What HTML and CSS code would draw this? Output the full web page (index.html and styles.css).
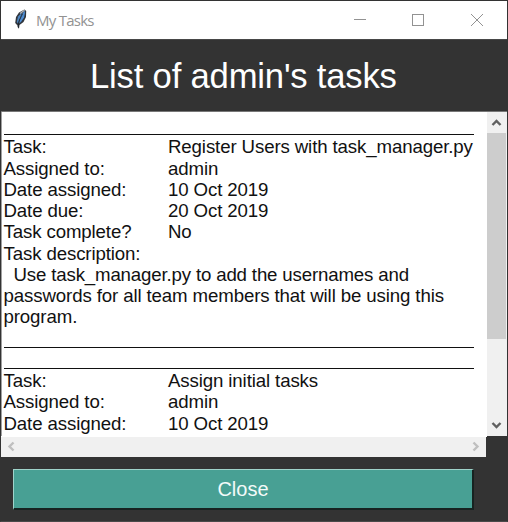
FILE: index.html
```html
<!DOCTYPE html>
<html lang="en">
<head>
<meta charset="utf-8">
<title>My Tasks</title>
<link rel="stylesheet" href="styles.css">
</head>
<body>
<div class="window">
  <header class="titlebar">
    <svg class="feather" width="14" height="22" viewBox="0 0 14 22">
      <path d="M10.5 1.5L12.2 3L12 9L9.5 14L5.5 17L5 20.5L4 20L3.5 17.5L1.2 15L2 9L5 4.5Z" fill="#30353b"/>
      <path d="M10.5 2.5L11 5L10 9.5L7 14L5 15.5L7 8Z" fill="#4c8bd0"/>
      <path d="M8 4.5L4 8.5L2.8 14L4 15.5Z" fill="#4c83be"/>
      <path d="M8.5 6L5 13L4.2 19" fill="none" stroke="#1b222b" stroke-width=".8"/>
      <path d="M10.5 2.2L6 5.5" stroke="#b4b8bd" stroke-width="1.2"/>
    </svg>
    <span class="caption">My Tasks</span>
    <svg class="controls" width="130" height="14" viewBox="0 0 130 14" fill="none" stroke="#929292" stroke-width="1">
      <path d="M0 6.5H12"/>
      <rect x="58.5" y="1.5" width="11" height="11"/>
      <path d="M117 1L129 13M129 1L117 13"/>
    </svg>
  </header>
  <h1 class="heading"><span>List of admin's tasks</span></h1>
  <div class="viewer">
    <main class="text">
      <div class="rule"></div>
      <div class="row"><span class="key">Task:</span><span>Register Users with task_manager.py</span></div>
      <div class="row"><span class="key">Assigned to:</span><span>admin</span></div>
      <div class="row"><span class="key">Date assigned:</span><span>10 Oct 2019</span></div>
      <div class="row"><span class="key">Date due:</span><span>20 Oct 2019</span></div>
      <div class="row"><span class="key">Task complete?</span><span>No</span></div>
      <div class="row">Task description:</div>
      <div class="row indent">Use task_manager.py to add the usernames and</div>
      <div class="row">passwords for all team members that will be using this</div>
      <div class="row">program.</div>
      <div class="rule"></div>
      <div class="rule"></div>
      <div class="row"><span class="key">Task:</span><span>Assign initial tasks</span></div>
      <div class="row"><span class="key">Assigned to:</span><span>admin</span></div>
      <div class="row"><span class="key">Date assigned:</span><span>10 Oct 2019</span></div>
    </main>
    <div class="vscroll">
      <svg width="20" height="21" viewBox="0 0 20 21"><path d="M5.5 13L9.5 9L13.5 13" fill="none" stroke="#606060" stroke-width="2.4"/></svg>
      <div class="thumb"></div>
      <svg width="20" height="21" viewBox="0 0 20 21"><path d="M5.5 8L9.5 12L13.5 8" fill="none" stroke="#606060" stroke-width="2.4"/></svg>
    </div>
  </div>
  <div class="hscroll">
    <svg width="20" height="20" viewBox="0 0 20 20"><path d="M12.5 5.5L8.5 9.5L12.5 13.5" fill="none" stroke="#bfbfbf" stroke-width="2.4"/></svg>
    <svg width="20" height="20" viewBox="0 0 20 20"><path d="M7.5 5.5L11.5 9.5L7.5 13.5" fill="none" stroke="#bfbfbf" stroke-width="2.4"/></svg>
  </div>
  <button class="close"><span>Close</span></button>
</div>
</body>
</html>
```
FILE: styles.css
```css
* { box-sizing: border-box; }
body { margin: 0; background: #333; font-family: "Liberation Sans", Arial, sans-serif; }
svg { display: block; flex: none; }
.window { width: 508px; height: 522px; overflow: hidden; border: 1px solid #333; border-bottom-color: #4a4a4a; background: #333; }
.titlebar { height: 38px; background: #fff; display: flex; align-items: center; padding-left: 13px; }
.feather { margin-top: -2px; }
.caption { margin: -1px 0 0 8px; font: 15px/20px "Open Sans", "Noto Sans", sans-serif; color: #929292; letter-spacing: -0.75px; width: 100px; white-space: nowrap; }
.controls { margin-left: 218px; }
.heading { margin: 0; height: 73px; border-top: 1px solid #484848; border-bottom: 1px solid #777; padding: 16px 0 0 89px; font-size: 34.67px; line-height: 40px; font-weight: 400; letter-spacing: -0.2px; color: #fff; white-space: nowrap; }
.viewer { display: flex; height: 325px; background: #fff; }
.text { width: 486px; height: 324px; background: #fff; border-left: 1px solid #a0a0a0; padding: 2px 0 0 1.5px; font-size: 18.67px; line-height: 23.4px; letter-spacing: -0.12px; color: #111; white-space: nowrap; overflow: hidden; }
.row { height: 21.27px; display: flex; }
.indent { padding-left: 10px; letter-spacing: -0.16px; }
.key { width: 164.5px; flex: none; }
.rule { height: 21.27px; width: 470.5px; border-bottom: 1px solid #111; }
.vscroll { width: 20px; height: 324px; background: #f0f0f0; display: flex; flex-direction: column; box-shadow: 0 1px #333; }
.thumb { height: 206px; width: 19px; background: #cdcdcd; margin-bottom: 76px; }
.hscroll { width: 485px; height: 20px; background: #f0f0f0; display: flex; justify-content: space-between; }
.close { display: block; margin: 12px 0 0 12px; width: 461px; height: 41px; padding: 0; background: #48a094; border-style: solid; border-width: 1px 2px 2px 1px; border-color: #9fd3ca #172321 #172321 #9fd3ca; color: #f4faf9; font: 20px/38px "Liberation Sans", Arial, sans-serif; text-align: center; }
```
